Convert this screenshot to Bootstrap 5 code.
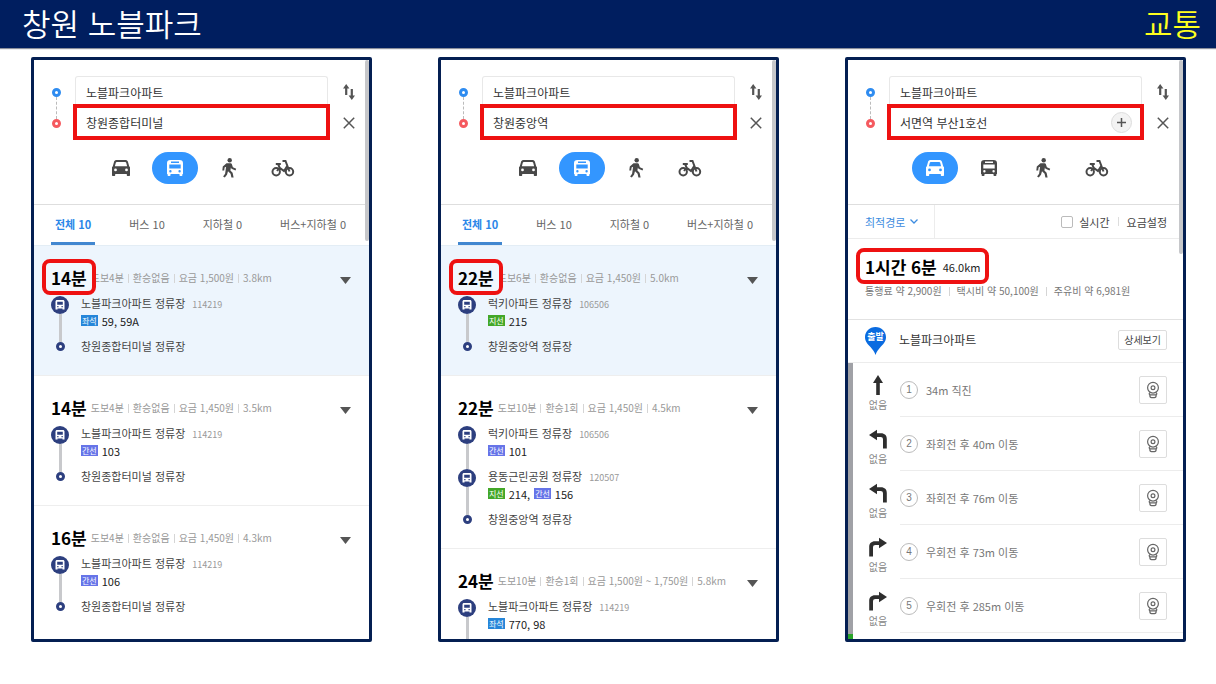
<!DOCTYPE html>
<html lang="ko">
<head>
<meta charset="utf-8">
<meta name="viewport" content="width=device-width, initial-scale=1">
<title>창원 노블파크 교통</title>
<link href="https://cdn.jsdelivr.net/npm/bootstrap@5.3.0/dist/css/bootstrap.min.css" rel="stylesheet">
<style>
  :root { --navy: #001e5f; --frame: #041f52; --blue: #3396ff; --alert: #ee1111; --line: #ececec; }
  body { font-family: "Noto Sans CJK KR", sans-serif; font-size: 11px; line-height: 16px; color: #333; background: #fff; }
  button { font: inherit; color: inherit; }
  .bare { border: 0; padding: 0; background: none; display: flex; align-items: center; justify-content: center; }
  .deck-bar { height: 48px; padding: 0 15px 0 22px; background: var(--navy); box-shadow: 0 1px 1px #8a8f9c; }
  .deck-bar h1, .deck-bar p { font-size: 31px; line-height: 46px; font-weight: 350; }
  .deck-bar p { color: #ffff1e; }
  .boards { display: grid; grid-template-columns: repeat(3, minmax(0, 1fr)); gap: 66px; padding: 9px 30px 42px 31px; min-height: 0; }
  .board { border: 3px solid var(--frame); border-radius: 2px; background: #fff; }
  .scroll-thumb { position: absolute; top: 0; right: 0; width: 4px; height: 181px; border-radius: 2px; background: #c6c7ca; z-index: 2; }
  .scroll-thumb.longer { height: 194px; }

  .finder { padding: 16px 14px 20px 18px; border-bottom: 1px solid #dedede; }
  .ends { width: 9px; padding-top: 12px; margin-right: 12px; }
  .ring { width: 9px; height: 9px; border: 3px solid #2f8cf0; border-radius: 50%; }
  .ring.goal { border-color: #f55a5f; }
  .dashes { height: 22px; border-left: 1px dashed #bbb; }
  .place { display: block; font-size: 12px; color: #333; outline: 0; background: #fff; }
  .place.from { height: 28px; margin: 0 2px; width: calc(100% - 4px); padding: 3px 10px 0; border: 1px solid #e8e8e8; border-bottom: 0; border-radius: 3px 3px 0 0; }
  .place.to { height: 36px; width: 100%; padding: 0 9px; border: 4px solid var(--alert); }
  .add-stop { position: absolute; right: 12px; bottom: 7px; width: 21px; height: 21px; border: 1px solid #ddd; border-radius: 50%; background: #f3f3f3; color: #555; }
  .tools { width: 12px; margin-left: 13px; color: #555; }
  .tools button { width: 12px; height: 31px; }
  .modes { gap: 8px; margin: 12px 0 0 46px; }
  .modes button { width: 46px; height: 32px; border-radius: 16px; color: #484848; }
  .modes button.on { background: var(--blue); color: #fff; }

  .kinds { padding: 0 23px 0 17px; border-bottom: 1px solid #e3edf5; }
  .kinds a { padding: 8px 4px 7px; line-height: 22px; color: #666; text-decoration: none; border-bottom: 3px solid transparent; }
  .kinds a:last-child { padding-right: 0; }
  .kinds a.on { color: #2a87e8; font-weight: 700; border-color: #4287d0; }

  .route { padding: 20px 18px 19px 17px; border-bottom: 1px solid #eee; }
  .route.picked { background: #edf5fd; }
  .route-top { height: 24px; margin-bottom: 3px; }
  .mins { font-size: 17px; line-height: 24px; font-weight: 700; color: #000; }
  .circled { position: relative; z-index: 1; }
  .circled::before { content: ""; position: absolute; inset: -7px -9px -5px; border: 4px solid var(--alert); border-radius: 8px; background: #fff; z-index: -1; }
  .picked .circled::before { background: #f1f7fd; }
  .facts { font-size: 10px; color: #999; margin: 0 auto 0 4px; }
  .facts span + span::before, .costs span + span::before { content: ""; display: inline-block; width: 1px; height: 9px; margin: 0 4px; background: #d5d5d5; vertical-align: -1px; }
  .stop { min-height: 43px; gap: 12px; }
  .stop.last { min-height: 20px; }
  .track { width: 18px; }
  .track i { width: 3px; background: #c8c9cc; }
  .stem { height: 3px; }
  .stem.blank { visibility: hidden; }
  .last .stem { height: 6px; }
  .bus-dot { width: 18px; height: 18px; border-radius: 50%; background: #2d3f7f; color: #fff; }
  .end-dot { width: 9px; height: 9px; border: 3px solid #2d3f7f; border-radius: 50%; background: #fff; }
  .stop-name { line-height: 20px; color: #444; }
  .stop-name small { font-size: 9px; line-height: 16px; color: #999; margin-left: 4px; }
  .buses { display: flex; align-items: center; gap: 4px; height: 15px; color: #222; }
  .line-tag { font-size: 8px; line-height: 11px; height: 11px; padding: 0 1px; color: #fff; background: #6674e8; }
  .line-tag.seat { background: #2686d9; }
  .line-tag.branch { background: #43a728; }

  .options { height: 34px; border-bottom: 1px solid var(--line); padding-right: 16px; color: #444; }
  .sorter { width: 87px; padding-left: 17px; gap: 5px; color: #3d8ce0; border-right: 1px solid var(--line); justify-content: flex-start; }
  .options input { width: 12px; height: 12px; margin: 0 6px 0 0; border: 1px solid #bbb; border-radius: 2px; appearance: none; background: #fff; }
  .bar-mark { width: 1px; height: 9px; margin: 0 8px; background: #ddd; }
  .summary { padding: 16px 17px 20px; border-bottom: 1px solid #e2e2e2; }
  .total { gap: 6px; line-height: 24px; color: #222; }
  .costs { margin-top: 4px; font-size: 10px; color: #777; }
  .costs span + span::before { margin: 0 7px; }
  .origin { height: 43px; padding: 0 16px 0 17px; border-bottom: 1px solid var(--line); }
  .origin-name { font-size: 12px; margin: 0 auto 2px 13px; }
  .detail { border: 1px solid #ddd; border-radius: 2px; background: #fff; font-size: 10px; line-height: 18px; padding: 0 5px; color: #444; margin-bottom: 2px; }
  .traffic { width: 5px; background: linear-gradient(#a0a1a6 271px, #2aa52a 271px); }
  .turns { padding-left: 12px; }
  .turn-sign { width: 26px; margin-right: 9px; color: #888; font-size: 10px; line-height: 14px; padding-top: 12px; }
  .turn-sign svg { color: #2e2e2e; margin-bottom: 3px; }
  .turn-text { height: 54px; padding: 0 16px 0 0; border-bottom: 1px solid var(--line); color: #777; }
  .turn-no { width: 18px; height: 18px; border: 1px solid #bbb; border-radius: 50%; font-size: 10px; line-height: 16px; margin-right: 8px; font-family: "Liberation Sans", sans-serif; }
  .view { width: 28px; height: 28px; border: 1px solid #ddd; border-radius: 2px; background: #fff; color: #666; padding: 0; }
  svg { display: block; flex: none; }
</style>
</head>
<body class="vh-100 d-flex flex-column overflow-hidden">

<svg width="0" height="0" class="position-absolute" aria-hidden="true">
  <symbol id="car" viewBox="0 0 20 18"><path fill="currentColor" fill-rule="evenodd" d="M6 1h8c1.600 0 2.600.6 3 2l1.200 4.300.8 1V16c0 .7-.3 1-1 1h-1.200c-.7 0-1-.3-1-1v-1H4.200v1c0 .7-.3 1-1 1H2c-.7 0-1-.3-1-1V8.300l.8-1L3 3c.4-1.400 1.400-2 3-2zm-.2 2c-.5 0-.8.200-1 .7L3.900 7.300h12.200l-.9-3.600c-.2-.5-.5-.7-1-.7zM4.500 9.500a1.400 1.400 0 1 0 0 2.800 1.400 1.400 0 0 0 0-2.800zm11 0a1.400 1.400 0 1 0 0 2.800 1.400 1.400 0 0 0 0-2.800z"/></symbol>
  <symbol id="bus" viewBox="0 0 18 18"><path fill="currentColor" fill-rule="evenodd" d="M4.500 1h9C15.800 1 17 2.200 17 4.200V15h-.6v1.200c0 .6-.3.8-.8.8h-1.300c-.5 0-.8-.2-.8-.8V15h-9v1.200c0 .6-.3.8-.8.8H2.400c-.5 0-.8-.2-.8-.8V15H1V4.200C1 2.200 2.200 1 4.500 1zM5 2.600v1.300h8V2.600zM3.300 5.500v4.100h11.400V5.500zm1.100 5.600a1.200 1.200 0 1 0 0 2.400 1.200 1.200 0 0 0 0-2.400zm9.200 0a1.200 1.200 0 1 0 0 2.400 1.200 1.200 0 0 0 0-2.400z"/></symbol>
  <symbol id="minibus" viewBox="0 0 10 10"><path fill="currentColor" fill-rule="evenodd" d="M2 0h6c.8 0 1.500.7 1.500 1.500V9.500h-2v-1h-5v1h-2V1.500C.5.7 1.200 0 2 0zm.2 1.800v2.900h5.600V1.800zm0 4.200v1.200h1.300V6zm4.300 0v1.200h1.300V6z"/></symbol>
  <symbol id="walk" viewBox="0 0 16 20"><circle cx="8.700" cy="2.300" r="2.200" fill="currentColor"/><path fill="currentColor" d="M5.500 5.200h4.200l1 .5 1.200 3.600 3.300 1.500-.7 1.600-4-1.700-.6-1.200-.5 3 2.200 2.300 1 4.700h-2.200l-.8-3.700-2.600-2.600-1 3.600-2.200 2.800-1.700-1.200 2-2.700 1-7-1.500.9-.4 3-1.900-.2.500-4z"/></symbol>
  <symbol id="bike" viewBox="0 0 24 18"><g fill="none" stroke="currentColor" stroke-width="2"><circle cx="5.200" cy="12.700" r="3.700"/><circle cx="18.500" cy="12.700" r="3.700"/><path d="M4.800 5h5M7.300 5.500l1.400 3.300 4.300 3.200 3.200-5M6 12l2.700-3.500M11.500 2h3l4 10.500"/></g></symbol>
  <symbol id="swap" viewBox="0 0 12 16"><path fill="currentColor" d="M3.200 0 6.400 4.500H4.300V11H2.100V4.500H0zM8.800 16 5.600 11.500h2.100V5h2.200v6.500H12z"/></symbol>
  <symbol id="cross" viewBox="0 0 12 12"><path fill="none" stroke="currentColor" stroke-width="1.500" d="m.8.8 10.400 10.400M11.200.8.8 11.200"/></symbol>
  <symbol id="caret" viewBox="0 0 11 7"><path fill="#555" d="M0 0h11L5.500 7z"/></symbol>
  <symbol id="ahead" viewBox="0 0 20 20"><path fill="currentColor" d="M10 0l5 8h-3.200v12H8.200V8H5z"/></symbol>
  <symbol id="left" viewBox="0 0 20 20"><path fill="currentColor" d="M1 6 9 .8v3.400h4c3.600 0 5.800 2.200 5.800 5.700v9.600h-3.800v-9c0-1.700-.8-2.500-2.500-2.500H9v3.300z"/></symbol>
  <symbol id="right" viewBox="0 0 20 20"><path fill="currentColor" d="M19 6 11 .8v3.400H7C3.400 4.200 1.200 6.400 1.200 9.900v9.600H5v-9C5 8.800 5.800 8 7.500 8H11v3.300z"/></symbol>
  <symbol id="roadview" viewBox="0 0 14 18"><g fill="none" stroke="currentColor" stroke-width="1.200"><circle cx="7" cy="6.700" r="5.400"/><circle cx="7" cy="6.700" r="1.900"/><path d="M4.200 11.400c-1.400 1-1.400 2 0 2.500h5.600c1.400-.5 1.400-1.500 0-2.500M3.800 14c0 1.800.6 2.600 1.700 2.600h3c1.100 0 1.700-.8 1.700-2.600"/></g></symbol>
</svg>

<header class="deck-bar d-flex justify-content-between flex-shrink-0 text-white position-relative">
  <h1 class="m-0">창원 노블파크</h1>
  <p class="m-0">교통</p>
</header>

<main class="boards flex-grow-1">

  <section class="board position-relative overflow-hidden">
    <div class="scroll-thumb"></div>
    <div class="finder">
      <div class="d-flex">
        <div class="ends"><div class="ring"></div><div class="dashes ms-1"></div><div class="ring goal"></div></div>
        <div class="flex-grow-1">
          <input class="place from" aria-label="출발지" value="노블파크아파트">
          <input class="place to" aria-label="도착지" value="창원종합터미널">
        </div>
        <div class="tools">
          <button class="bare" aria-label="바꾸기"><svg width="12" height="16"><use href="#swap"/></svg></button>
          <button class="bare" aria-label="닫기"><svg width="12" height="12"><use href="#cross"/></svg></button>
        </div>
      </div>
      <div class="modes d-flex">
        <button class="bare" aria-label="자동차"><svg width="20" height="18"><use href="#car"/></svg></button>
        <button class="bare on" aria-label="대중교통"><svg width="18" height="18"><use href="#bus"/></svg></button>
        <button class="bare" aria-label="도보"><svg width="16" height="20"><use href="#walk"/></svg></button>
        <button class="bare" aria-label="자전거"><svg width="24" height="18"><use href="#bike"/></svg></button>
      </div>
    </div>
    <nav class="kinds d-flex justify-content-between">
      <a class="on" href="#">전체 10</a><a href="#">버스 10</a><a href="#">지하철 0</a><a href="#">버스+지하철 0</a>
    </nav>
    <article class="route picked">
      <div class="route-top d-flex align-items-center">
        <strong class="mins circled">14분</strong>
        <div class="facts"><span>도보4분</span><span>환승없음</span><span>요금 1,500원</span><span>3.8km</span></div>
        <button class="bare mt-1" aria-label="펼치기"><svg width="11" height="7"><use href="#caret"/></svg></button>
      </div>
      <div class="stop d-flex">
        <div class="track d-flex flex-column align-items-center"><i class="stem blank"></i><span class="bus-dot d-flex align-items-center justify-content-center"><svg width="10" height="10"><use href="#minibus"/></svg></span><i class="flex-grow-1"></i></div>
        <div><div class="stop-name">노블파크아파트 정류장 <small>114219</small></div><div class="buses"><span class="line-tag seat">좌석</span>59, 59A</div></div>
      </div>
      <div class="stop last d-flex">
        <div class="track d-flex flex-column align-items-center"><i class="stem"></i><span class="end-dot"></span></div>
        <div class="stop-name">창원종합터미널 정류장</div>
      </div>
    </article>
    <article class="route">
      <div class="route-top d-flex align-items-center">
        <strong class="mins">14분</strong>
        <div class="facts"><span>도보4분</span><span>환승없음</span><span>요금 1,450원</span><span>3.5km</span></div>
        <button class="bare mt-1" aria-label="펼치기"><svg width="11" height="7"><use href="#caret"/></svg></button>
      </div>
      <div class="stop d-flex">
        <div class="track d-flex flex-column align-items-center"><i class="stem blank"></i><span class="bus-dot d-flex align-items-center justify-content-center"><svg width="10" height="10"><use href="#minibus"/></svg></span><i class="flex-grow-1"></i></div>
        <div><div class="stop-name">노블파크아파트 정류장 <small>114219</small></div><div class="buses"><span class="line-tag">간선</span>103</div></div>
      </div>
      <div class="stop last d-flex">
        <div class="track d-flex flex-column align-items-center"><i class="stem"></i><span class="end-dot"></span></div>
        <div class="stop-name">창원종합터미널 정류장</div>
      </div>
    </article>
    <article class="route border-0">
      <div class="route-top d-flex align-items-center">
        <strong class="mins">16분</strong>
        <div class="facts"><span>도보4분</span><span>환승없음</span><span>요금 1,450원</span><span>4.3km</span></div>
        <button class="bare mt-1" aria-label="펼치기"><svg width="11" height="7"><use href="#caret"/></svg></button>
      </div>
      <div class="stop d-flex">
        <div class="track d-flex flex-column align-items-center"><i class="stem blank"></i><span class="bus-dot d-flex align-items-center justify-content-center"><svg width="10" height="10"><use href="#minibus"/></svg></span><i class="flex-grow-1"></i></div>
        <div><div class="stop-name">노블파크아파트 정류장 <small>114219</small></div><div class="buses"><span class="line-tag">간선</span>106</div></div>
      </div>
      <div class="stop last d-flex">
        <div class="track d-flex flex-column align-items-center"><i class="stem"></i><span class="end-dot"></span></div>
        <div class="stop-name">창원종합터미널 정류장</div>
      </div>
    </article>
  </section>

  <section class="board position-relative overflow-hidden">
    <div class="scroll-thumb"></div>
    <div class="finder">
      <div class="d-flex">
        <div class="ends"><div class="ring"></div><div class="dashes ms-1"></div><div class="ring goal"></div></div>
        <div class="flex-grow-1">
          <input class="place from" aria-label="출발지" value="노블파크아파트">
          <input class="place to" aria-label="도착지" value="창원중앙역">
        </div>
        <div class="tools">
          <button class="bare" aria-label="바꾸기"><svg width="12" height="16"><use href="#swap"/></svg></button>
          <button class="bare" aria-label="닫기"><svg width="12" height="12"><use href="#cross"/></svg></button>
        </div>
      </div>
      <div class="modes d-flex">
        <button class="bare" aria-label="자동차"><svg width="20" height="18"><use href="#car"/></svg></button>
        <button class="bare on" aria-label="대중교통"><svg width="18" height="18"><use href="#bus"/></svg></button>
        <button class="bare" aria-label="도보"><svg width="16" height="20"><use href="#walk"/></svg></button>
        <button class="bare" aria-label="자전거"><svg width="24" height="18"><use href="#bike"/></svg></button>
      </div>
    </div>
    <nav class="kinds d-flex justify-content-between">
      <a class="on" href="#">전체 10</a><a href="#">버스 10</a><a href="#">지하철 0</a><a href="#">버스+지하철 0</a>
    </nav>
    <article class="route picked">
      <div class="route-top d-flex align-items-center">
        <strong class="mins circled">22분</strong>
        <div class="facts"><span>도보6분</span><span>환승없음</span><span>요금 1,450원</span><span>5.0km</span></div>
        <button class="bare mt-1" aria-label="펼치기"><svg width="11" height="7"><use href="#caret"/></svg></button>
      </div>
      <div class="stop d-flex">
        <div class="track d-flex flex-column align-items-center"><i class="stem blank"></i><span class="bus-dot d-flex align-items-center justify-content-center"><svg width="10" height="10"><use href="#minibus"/></svg></span><i class="flex-grow-1"></i></div>
        <div><div class="stop-name">럭키아파트 정류장 <small>106506</small></div><div class="buses"><span class="line-tag branch">지선</span>215</div></div>
      </div>
      <div class="stop last d-flex">
        <div class="track d-flex flex-column align-items-center"><i class="stem"></i><span class="end-dot"></span></div>
        <div class="stop-name">창원중앙역 정류장</div>
      </div>
    </article>
    <article class="route">
      <div class="route-top d-flex align-items-center">
        <strong class="mins">22분</strong>
        <div class="facts"><span>도보10분</span><span>환승1회</span><span>요금 1,450원</span><span>4.5km</span></div>
        <button class="bare mt-1" aria-label="펼치기"><svg width="11" height="7"><use href="#caret"/></svg></button>
      </div>
      <div class="stop d-flex">
        <div class="track d-flex flex-column align-items-center"><i class="stem blank"></i><span class="bus-dot d-flex align-items-center justify-content-center"><svg width="10" height="10"><use href="#minibus"/></svg></span><i class="flex-grow-1"></i></div>
        <div><div class="stop-name">럭키아파트 정류장 <small>106506</small></div><div class="buses"><span class="line-tag">간선</span>101</div></div>
      </div>
      <div class="stop d-flex">
        <div class="track d-flex flex-column align-items-center"><i class="stem"></i><span class="bus-dot d-flex align-items-center justify-content-center"><svg width="10" height="10"><use href="#minibus"/></svg></span><i class="flex-grow-1"></i></div>
        <div><div class="stop-name">용동근린공원 정류장 <small>120507</small></div><div class="buses"><span class="line-tag branch">지선</span>214, <span class="line-tag">간선</span>156</div></div>
      </div>
      <div class="stop last d-flex">
        <div class="track d-flex flex-column align-items-center"><i class="stem"></i><span class="end-dot"></span></div>
        <div class="stop-name">창원중앙역 정류장</div>
      </div>
    </article>
    <article class="route">
      <div class="route-top d-flex align-items-center">
        <strong class="mins">24분</strong>
        <div class="facts"><span>도보10분</span><span>환승1회</span><span>요금 1,500원 ~ 1,750원</span><span>5.8km</span></div>
        <button class="bare mt-1" aria-label="펼치기"><svg width="11" height="7"><use href="#caret"/></svg></button>
      </div>
      <div class="stop d-flex">
        <div class="track d-flex flex-column align-items-center"><i class="stem blank"></i><span class="bus-dot d-flex align-items-center justify-content-center"><svg width="10" height="10"><use href="#minibus"/></svg></span><i class="flex-grow-1"></i></div>
        <div><div class="stop-name">노블파크아파트 정류장 <small>114219</small></div><div class="buses"><span class="line-tag seat">좌석</span>770, 98</div></div>
      </div>
    </article>
  </section>

  <section class="board position-relative overflow-hidden">
    <div class="scroll-thumb longer"></div>
    <div class="finder">
      <div class="d-flex">
        <div class="ends"><div class="ring"></div><div class="dashes ms-1"></div><div class="ring goal"></div></div>
        <div class="flex-grow-1 position-relative">
          <input class="place from" aria-label="출발지" value="노블파크아파트">
          <input class="place to" aria-label="도착지" value="서면역 부산1호선">
          <button class="bare add-stop" aria-label="경유지 추가"><svg width="9" height="9" viewBox="0 0 9 9"><path stroke="currentColor" stroke-width="1.500" d="M4.500 0v9M0 4.500h9"/></svg></button>
        </div>
        <div class="tools">
          <button class="bare" aria-label="바꾸기"><svg width="12" height="16"><use href="#swap"/></svg></button>
          <button class="bare" aria-label="닫기"><svg width="12" height="12"><use href="#cross"/></svg></button>
        </div>
      </div>
      <div class="modes d-flex">
        <button class="bare on" aria-label="자동차"><svg width="20" height="18"><use href="#car"/></svg></button>
        <button class="bare" aria-label="대중교통"><svg width="18" height="18"><use href="#bus"/></svg></button>
        <button class="bare" aria-label="도보"><svg width="16" height="20"><use href="#walk"/></svg></button>
        <button class="bare" aria-label="자전거"><svg width="24" height="18"><use href="#bike"/></svg></button>
      </div>
    </div>
    <div class="options d-flex align-items-center">
      <button class="bare sorter h-100 me-auto">최적경로 <svg width="8" height="5" viewBox="0 0 8 5"><path fill="none" stroke="currentColor" stroke-width="1.300" d="m.5.5 3.500 3.500L7.500.5"/></svg></button>
      <input type="checkbox" id="live"><label for="live">실시간</label>
      <span class="bar-mark"></span>
      <button class="bare">요금설정</button>
    </div>
    <div class="summary">
      <div class="d-flex"><div class="total circled d-flex align-items-center"><strong class="mins">1시간 6분</strong><span>46.0km</span></div></div>
      <div class="costs"><span>통행료 약 2,900원</span><span>택시비 약 50,100원</span><span>주유비 약 6,981원</span></div>
    </div>
    <div class="origin d-flex align-items-center">
      <svg width="21" height="28" viewBox="0 0 21 28"><path fill="#0a6be0" d="M10.500 0C16.500 0 21 4.500 21 10.200c0 4.500-3 7-5.500 9.800-2.200 2.500-4 5-5 8-1-3-2.800-5.500-5-8C3 17.200 0 14.700 0 10.200 0 4.500 4.500 0 10.500 0z"/><text x="10.500" y="13" text-anchor="middle" font-size="9" font-weight="700" fill="#fff">출발</text></svg>
      <span class="origin-name">노블파크아파트</span>
      <button class="detail">상세보기</button>
    </div>
    <div class="d-flex">
      <div class="traffic"></div>
      <ol class="turns list-unstyled flex-grow-1 m-0">
        <li class="d-flex"><div class="turn-sign d-flex flex-column align-items-center"><svg width="20" height="20"><use href="#ahead"/></svg>없음</div><div class="turn-text d-flex align-items-center flex-grow-1"><span class="turn-no text-center">1</span><span class="me-auto">34m 직진</span><button class="bare view" aria-label="로드뷰"><svg width="14" height="18"><use href="#roadview"/></svg></button></div></li>
        <li class="d-flex"><div class="turn-sign d-flex flex-column align-items-center"><svg width="20" height="20"><use href="#left"/></svg>없음</div><div class="turn-text d-flex align-items-center flex-grow-1"><span class="turn-no text-center">2</span><span class="me-auto">좌회전 후 40m 이동</span><button class="bare view" aria-label="로드뷰"><svg width="14" height="18"><use href="#roadview"/></svg></button></div></li>
        <li class="d-flex"><div class="turn-sign d-flex flex-column align-items-center"><svg width="20" height="20"><use href="#left"/></svg>없음</div><div class="turn-text d-flex align-items-center flex-grow-1"><span class="turn-no text-center">3</span><span class="me-auto">좌회전 후 76m 이동</span><button class="bare view" aria-label="로드뷰"><svg width="14" height="18"><use href="#roadview"/></svg></button></div></li>
        <li class="d-flex"><div class="turn-sign d-flex flex-column align-items-center"><svg width="20" height="20"><use href="#right"/></svg>없음</div><div class="turn-text d-flex align-items-center flex-grow-1"><span class="turn-no text-center">4</span><span class="me-auto">우회전 후 73m 이동</span><button class="bare view" aria-label="로드뷰"><svg width="14" height="18"><use href="#roadview"/></svg></button></div></li>
        <li class="d-flex pb-2"><div class="turn-sign d-flex flex-column align-items-center"><svg width="20" height="20"><use href="#right"/></svg>없음</div><div class="turn-text d-flex align-items-center flex-grow-1"><span class="turn-no text-center">5</span><span class="me-auto">우회전 후 285m 이동</span><button class="bare view" aria-label="로드뷰"><svg width="14" height="18"><use href="#roadview"/></svg></button></div></li>
      </ol>
    </div>
  </section>
</main>
<script src="https://cdn.jsdelivr.net/npm/bootstrap@5.3.0/dist/js/bootstrap.bundle.min.js"></script>
</body>
</html>
